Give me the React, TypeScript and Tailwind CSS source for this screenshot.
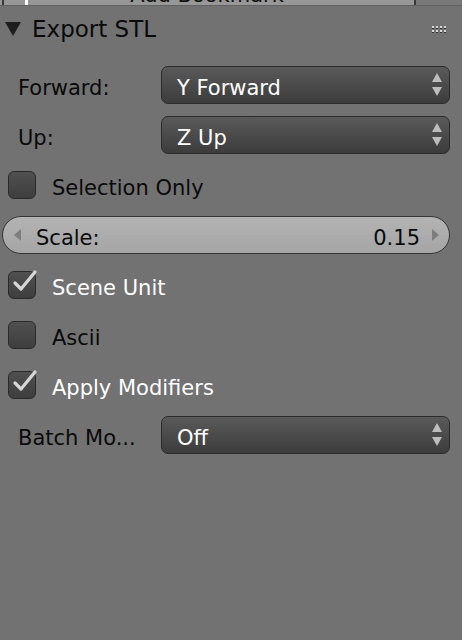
import React from "react";

const font = { fontFamily: '"DejaVu Sans", Verdana, sans-serif' };

function Arrows() {
  return (
    <svg width="12" height="26" viewBox="0 0 12 26" className="shrink-0">
      <polygon points="6,1 11,10 1,10" fill="#bdbdbd" />
      <polygon points="1,15 11,15 6,24" fill="#bdbdbd" />
    </svg>
  );
}

function Dropdown({ label, value }: { label: string; value: string }) {
  return (
    <div className="flex h-[38px] items-center pl-[18px] pr-[12px]">
      <div className="w-[143px] shrink-0 pt-[8px] text-[21px] text-[#0a0a0a]">{label}</div>
      <div className="flex h-[38px] flex-1 items-center rounded-[7px] border-[1.5px] border-[#2b2b2b] bg-gradient-to-b from-[#5a5a5a] to-[#3c3c3c] pl-[15px] pr-[6px]">
        <span className="flex-1 pt-[8px] text-[21px] text-white">{value}</span>
        <Arrows />
      </div>
    </div>
  );
}

function Checkbox({ label, checked }: { label: string; checked: boolean }) {
  return (
    <div className="flex h-[38px] items-center pl-[8px]">
      <div className="relative h-[28px] w-[28px] shrink-0 rounded-[6px] border-[1.5px] border-[#2a2a2a] bg-gradient-to-b from-[#505050] to-[#3e3e3e]">
        {checked && (
          <svg
            className="absolute left-0 top-0 overflow-visible"
            width="28"
            height="28"
            viewBox="0 0 28 28"
          >
            <polyline
              points="6,11 12,17 26,0"
              fill="none"
              stroke="#d6d6d6"
              strokeWidth="3.2"
              strokeLinecap="round"
              strokeLinejoin="round"
            />
          </svg>
        )}
      </div>
      <span className={`ml-[16px] pt-[8px] text-[21px] ${checked ? "text-white" : "text-[#0a0a0a]"}`}>{label}</span>
    </div>
  );
}

export default function App() {
  return (
    <div className="flex h-[640px] w-[462px] flex-col overflow-hidden bg-[#727272]" style={font}>
      {/* top strip */}
      <div className="flex h-[6px] shrink-0 border-b border-[#626262]">
        <div className="relative flex flex-1 justify-center overflow-hidden bg-[#979797]">
          <div className="absolute left-[2px] top-0 h-full w-[2px] bg-[#3a3a3a]" />
          <div className="absolute left-[25px] top-0 h-full w-[3px] bg-white" />
          <span className="mt-[-18px] whitespace-nowrap text-[21px] leading-[26px] text-[#111]">Add Bookmark</span>
        </div>
        <div className="w-[48px] border-l-2 border-[#3a3a3a] bg-[#787878]" />
      </div>

      {/* header */}
      <div className="flex h-[46px] shrink-0 items-center pl-[5px] pr-[16px]">
        <svg width="16" height="14" viewBox="0 0 16 14" className="shrink-0">
          <polygon points="0,0 16,0 8,14" fill="#1e1e1e" />
        </svg>
        <span className="ml-[11px] flex-1 text-[23px] text-[#0a0a0a]">Export STL</span>
        <svg width="14" height="7" viewBox="0 0 14 7" className="shrink-0">
          {[0, 4, 8, 12].map((x) => (
            <g key={x}>
              <rect x={x} y={0} width="2" height="2" fill="#d8d8d8" />
              <rect x={x} y={2} width="2" height="1" fill="#333" />
              <rect x={x} y={4} width="2" height="2" fill="#d8d8d8" />
              <rect x={x} y={6} width="2" height="1" fill="#333" />
            </g>
          ))}
        </svg>
      </div>

      <div className="mt-[14px] flex flex-col gap-[12px]">
        <Dropdown label="Forward:" value="Y Forward" />
        <Dropdown label="Up:" value="Z Up" />
        <Checkbox label="Selection Only" checked={false} />
        <div className="pl-[2px] pr-[12px]">
          <div className="flex h-[38px] items-center rounded-full border-[1.5px] border-[#363636] bg-gradient-to-b from-[#b3b3b3] to-[#a5a5a5] pl-[11px] pr-[10px]">
            <svg width="7" height="12" viewBox="0 0 7 12" className="shrink-0">
              <polygon points="7,0 7,12 0,6" fill="#7e7e7e" />
            </svg>
            <span className="ml-[15px] flex-1 pt-[8px] text-[21px] text-[#0a0a0a]">Scale:</span>
            <span className="pt-[8px] text-[21px] text-[#0a0a0a]">0.15</span>
            <svg width="7" height="12" viewBox="0 0 7 12" className="ml-[12px] shrink-0">
              <polygon points="0,0 7,6 0,12" fill="#7e7e7e" />
            </svg>
          </div>
        </div>
        <Checkbox label="Scene Unit" checked={true} />
        <Checkbox label="Ascii" checked={false} />
        <Checkbox label="Apply Modifiers" checked={true} />
        <Dropdown label="Batch Mo..." value="Off" />
      </div>
    </div>
  );
}
